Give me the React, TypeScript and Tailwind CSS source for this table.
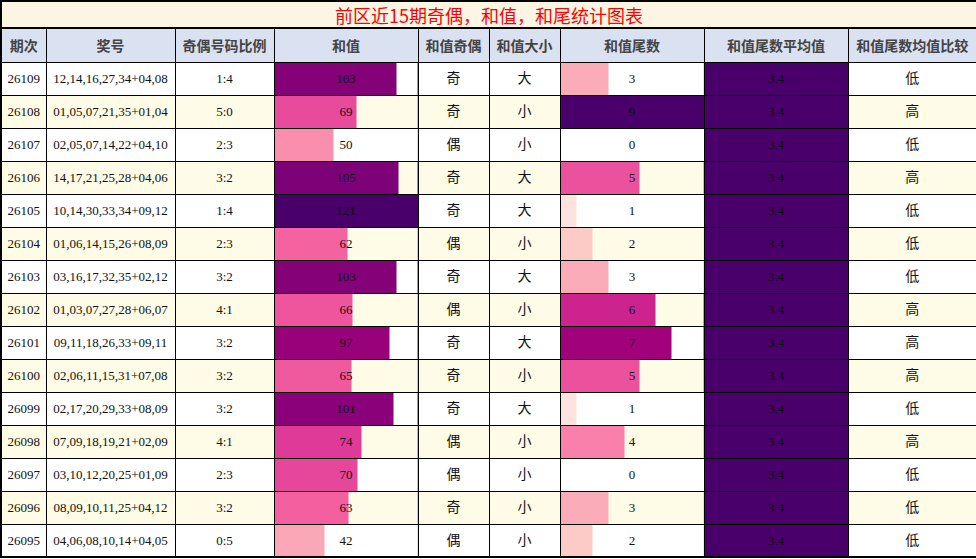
import React from 'react'

const RDPU = ['#fff7f3', '#fde0dd', '#fcc5c0', '#fa9fb5', '#f768a1', '#dd3497', '#ae017e', '#7a0177', '#49006a']

function hexToRgb(h: string) {
  const n = parseInt(h.slice(1), 16)
  return [(n >> 16) & 255, (n >> 8) & 255, n & 255]
}

function rdpu(t: number) {
  const x = Math.max(0, Math.min(1, t)) * (RDPU.length - 1)
  const i = Math.min(Math.floor(x), RDPU.length - 2)
  const f = x - i
  const a = hexToRgb(RDPU[i])
  const b = hexToRgb(RDPU[i + 1])
  const c = a.map((v, k) => Math.round(v + (b[k] - v) * f))
  return `rgb(${c[0]},${c[1]},${c[2]})`
}

function barStyle(v: number, max: number): React.CSSProperties {
  if (v <= 0) return {}
  const p = (v / max) * 100
  const col = rdpu(v / max)
  return { backgroundImage: `linear-gradient(to right, ${col} 0, ${col} ${p}%, transparent ${p}%)` }
}

const rows: [string, string, string, number, string, string, number, string, string][] = [
  ['26109', '12,14,16,27,34+04,08', '1:4', 103, '奇', '大', 3, '3.4', '低'],
  ['26108', '01,05,07,21,35+01,04', '5:0', 69, '奇', '小', 9, '3.4', '高'],
  ['26107', '02,05,07,14,22+04,10', '2:3', 50, '偶', '小', 0, '3.4', '低'],
  ['26106', '14,17,21,25,28+04,06', '3:2', 105, '奇', '大', 5, '3.4', '高'],
  ['26105', '10,14,30,33,34+09,12', '1:4', 121, '奇', '大', 1, '3.4', '低'],
  ['26104', '01,06,14,15,26+08,09', '2:3', 62, '偶', '小', 2, '3.4', '低'],
  ['26103', '03,16,17,32,35+02,12', '3:2', 103, '奇', '大', 3, '3.4', '低'],
  ['26102', '01,03,07,27,28+06,07', '4:1', 66, '偶', '小', 6, '3.4', '高'],
  ['26101', '09,11,18,26,33+09,11', '3:2', 97, '奇', '大', 7, '3.4', '高'],
  ['26100', '02,06,11,15,31+07,08', '3:2', 65, '奇', '小', 5, '3.4', '高'],
  ['26099', '02,17,20,29,33+08,09', '3:2', 101, '奇', '大', 1, '3.4', '低'],
  ['26098', '07,09,18,19,21+02,09', '4:1', 74, '偶', '小', 4, '3.4', '高'],
  ['26097', '03,10,12,20,25+01,09', '2:3', 70, '偶', '小', 0, '3.4', '低'],
  ['26096', '08,09,10,11,25+04,12', '3:2', 63, '奇', '小', 3, '3.4', '低'],
  ['26095', '04,06,08,10,14+04,05', '0:5', 42, '偶', '小', 2, '3.4', '低'],
]

const headers = ['期次', '奖号', '奇偶号码比例', '和值', '和值奇偶', '和值大小', '和值尾数', '和值尾数平均值', '和值尾数均值比较']

export default function App() {
  const sumMax = Math.max(...rows.map((r) => r[3]))
  const tailMax = Math.max(...rows.map((r) => r[6]))
  const td = 'border border-black h-[33px] p-0 text-center'

  return (
    <div className="w-[976px] h-[559px] bg-white">
      <table className="w-[976px] table-fixed border-collapse border-2 border-black font-['Liberation_Serif','Noto_Sans_CJK_SC',serif] text-[13px] text-[#111]">
        <colgroup>
          <col className="w-[45px]" />
          <col className="w-[129px]" />
          <col className="w-[99px]" />
          <col className="w-[144px]" />
          <col className="w-[71px]" />
          <col className="w-[71px]" />
          <col className="w-[144px]" />
          <col className="w-[144px]" />
          <col className="w-[129px]" />
        </colgroup>
        <thead>
          <tr>
            <th colSpan={9} className="border-2 border-black bg-[#fcf5e4] h-[27px] p-0 text-center font-['Noto_Sans_CJK_SC',sans-serif] text-[18px] font-normal text-[#ff0000] leading-none">
              前区近15期奇偶，和值，和尾统计图表
            </th>
          </tr>
          <tr className="bg-[#dae1f1]">
            {headers.map((h) => (
              <th key={h} className="border border-black h-[34px] p-0 text-center font-['Noto_Sans_CJK_SC',sans-serif] text-[14px] font-bold text-[#444]">
                {h}
              </th>
            ))}
          </tr>
        </thead>
        <tbody>
          {rows.map((r, i) => (
            <tr key={r[0]} className={i % 2 === 1 ? 'bg-[#fefbe6]' : 'bg-white'}>
              <td className={td}>{r[0]}</td>
              <td className={td}>{r[1]}</td>
              <td className={td}>{r[2]}</td>
              <td className={td} style={barStyle(r[3], sumMax)}>{r[3]}</td>
              <td className={`${td} text-[14px]`}>{r[4]}</td>
              <td className={`${td} text-[14px]`}>{r[5]}</td>
              <td className={td} style={barStyle(r[6], tailMax)}>{r[6]}</td>
              <td className={`${td} bg-[#49006a]`}>{r[7]}</td>
              <td className={`${td} text-[14px]`}>{r[8]}</td>
            </tr>
          ))}
        </tbody>
      </table>
    </div>
  )
}
